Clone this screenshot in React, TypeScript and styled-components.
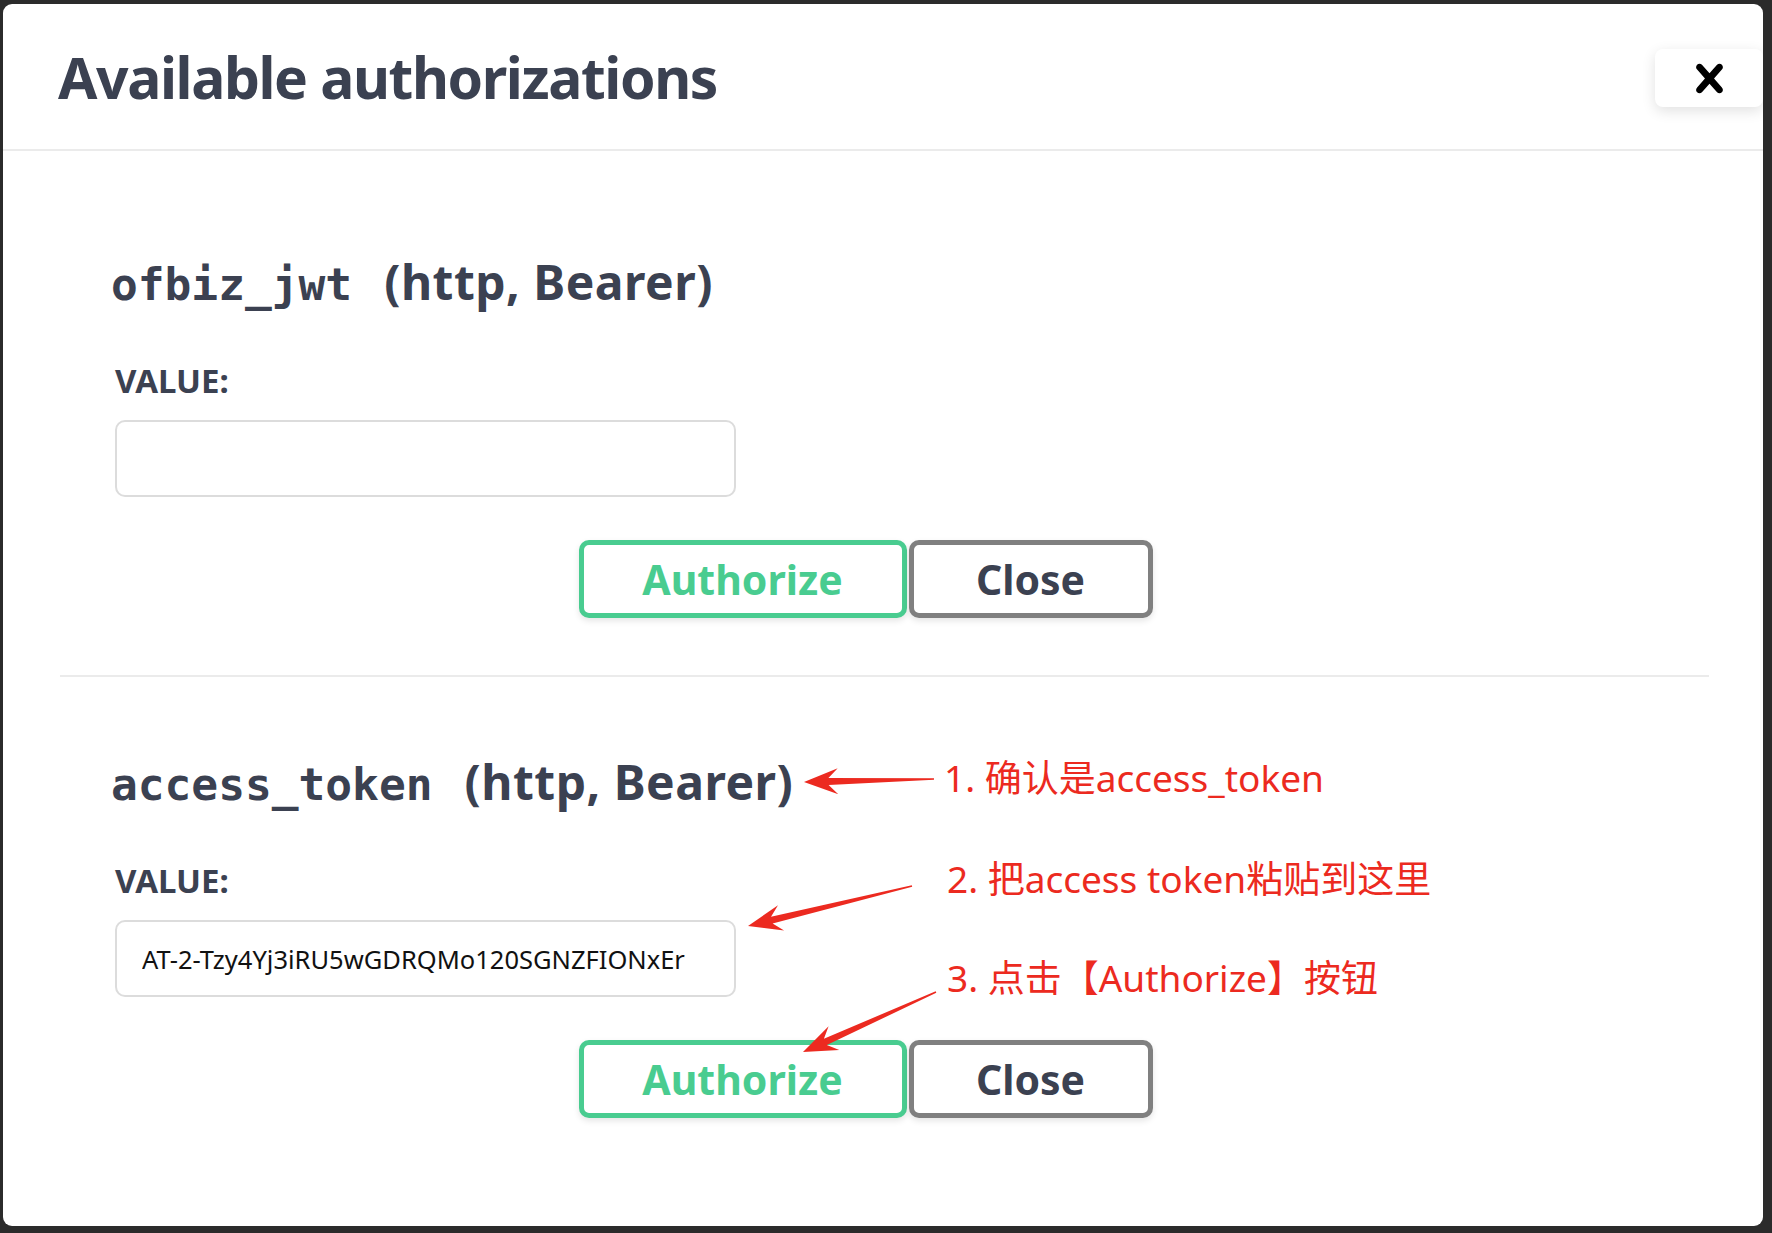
import React from "react";
import styled, { createGlobalStyle } from "styled-components";

const Global = createGlobalStyle`
  html, body { margin: 0; padding: 0; background: #2b2b2b; }
  body { font-family: "Noto Sans", "Noto Sans CJK SC", sans-serif; }
  * { box-sizing: border-box; }
`;

const Backdrop = styled.div`
  width: 1772px;
  height: 1233px;
  padding: 4px 9px 7px 3px;
  background: #2b2b2b;
`;

const Modal = styled.div`
  position: relative;
  height: 100%;
  background: #fff;
  border-radius: 9px;
  display: flex;
  flex-direction: column;
  overflow: hidden;
`;

const Header = styled.header`
  display: flex;
  align-items: flex-start;
  justify-content: space-between;
  height: 147px;
  padding: 45px 0 0 55px;
  border-bottom: 2px solid #ebebeb;
`;

const Title = styled.h3`
  margin: 0;
  font-size: 57px;
  line-height: 57px;
  font-weight: 700;
  color: #3b4151;
  letter-spacing: -1.4px;
`;

const CloseIconButton = styled.button`
  width: 108px;
  height: 58px;
  border: none;
  background: #fff;
  border-radius: 8px;
  box-shadow: 0 4px 14px rgba(0, 0, 0, 0.12);
  display: flex;
  align-items: center;
  justify-content: center;
  padding: 0;
  cursor: pointer;
  svg { width: 57px; height: 57px; }
`;

const Content = styled.div`
  padding: 26px 54px 0 57px;
  display: flex;
  flex-direction: column;
`;

const Section = styled.section<{ $divider?: boolean }>`
  padding: 75px 0 57px;
  border-bottom: ${(p) => (p.$divider ? "2px solid #ebebeb" : "none")};
`;

const Field = styled.div`
  padding-left: 55px;
  display: flex;
  flex-direction: column;
  align-items: flex-start;
`;

const SchemeTitle = styled.h4`
  margin: 0 0 46px -4px;
  font-size: 48px;
  line-height: 60px;
  font-weight: 700;
  color: #3b4151;
  letter-spacing: 0.5px;
  white-space: nowrap;
`;

const Code = styled.code`
  font-family: "DejaVu Sans Mono", monospace;
  font-size: 44.5px;
  font-weight: 700;
  letter-spacing: 0;
  margin-right: 32px;
`;

const Label = styled.label`
  font-size: 33px;
  line-height: 40px;
  font-weight: 700;
  color: #3b4151;
  margin-bottom: 19px;
`;

const Input = styled.input`
  width: 621px;
  height: 77px;
  border: 2px solid #dcdcdc;
  border-radius: 10px;
  padding: 0 0 0 25px;
  font-family: "Noto Sans", sans-serif;
  font-size: 25.5px;
  color: #111;
  background: #fff;
  outline: none;
  margin-bottom: 43px;
`;

const ButtonRow = styled.div`
  display: flex;
  justify-content: center;
  gap: 2px;
`;

const Btn = styled.button<{ $variant: "authorize" | "close" }>`
  height: 78px;
  width: ${(p) => (p.$variant === "authorize" ? "328px" : "244px")};
  margin-right: ${(p) => (p.$variant === "close" ? "38px" : "0")};
  border: 5px solid ${(p) => (p.$variant === "authorize" ? "#49cc90" : "#808080")};
  color: ${(p) => (p.$variant === "authorize" ? "#49cc90" : "#3b4151")};
  background: #fff;
  border-radius: 10px;
  box-shadow: 0 3px 6px rgba(0, 0, 0, 0.1);
  font-family: "Noto Sans", sans-serif;
  font-size: 41px;
  font-weight: 700;
  padding: 0;
  cursor: pointer;
`;

const Note = styled.div<{ $top: number; $left: number }>`
  position: absolute;
  top: ${(p) => p.$top}px;
  left: ${(p) => p.$left}px;
  font-family: "Noto Sans", "Noto Sans CJK SC", sans-serif;
  font-size: 37px;
  line-height: 38px;
  color: #ec2a20;
  white-space: nowrap;
`;

const Overlay = styled.svg`
  position: absolute;
  left: 0;
  top: 0;
  width: 100%;
  height: 100%;
  pointer-events: none;
`;

function arrowPoints(x1: number, y1: number, x2: number, y2: number) {
  const dx = x2 - x1;
  const dy = y2 - y1;
  const len = Math.hypot(dx, dy);
  const ux = dx / len;
  const uy = dy / len;
  const nx = -uy;
  const ny = ux;
  const H = 34;
  const W = 13;
  const w = 3.5;
  const tailW = 0.8;
  const bx = x2 - ux * H * 0.72;
  const by = y2 - uy * H * 0.72;
  const hx = x2 - ux * H;
  const hy = y2 - uy * H;
  const pts = [
    [x1 + nx * tailW, y1 + ny * tailW],
    [bx + nx * w, by + ny * w],
    [hx + nx * W, hy + ny * W],
    [x2, y2],
    [hx - nx * W, hy - ny * W],
    [bx - nx * w, by - ny * w],
    [x1 - nx * tailW, y1 - ny * tailW],
  ];
  return pts.map((p) => `${p[0].toFixed(1)},${p[1].toFixed(1)}`).join(" ");
}

const CloseIcon = () => (
  <svg viewBox="0 0 20 20" aria-hidden="true">
    <path
      fill="#000"
      d="M14.348 14.849c-.469.469-1.229.469-1.697 0L10 11.819l-2.651 3.029c-.469.469-1.229.469-1.697 0-.469-.469-.469-1.229 0-1.697l2.758-3.15-2.759-3.152c-.469-.469-.469-1.228 0-1.697.469-.469 1.228-.469 1.697 0L10 8.183l2.651-3.031c.469-.469 1.228-.469 1.697 0 .469.469.469 1.229 0 1.697l-2.758 3.152 2.758 3.15c.469.469.469 1.229 0 1.698z"
    />
  </svg>
);

type Scheme = { name: string; value: string };

const schemes: Scheme[] = [
  { name: "ofbiz_jwt", value: "" },
  { name: "access_token", value: "AT-2-Tzy4Yj3iRU5wGDRQMo120SGNZFIONxEr" },
];

export default function App() {
  return (
    <>
      <Global />
      <Backdrop>
        <Modal>
          <Header>
            <Title>Available authorizations</Title>
            <CloseIconButton aria-label="Close">
              <CloseIcon />
            </CloseIconButton>
          </Header>
          <Content>
            {schemes.map((s, i) => (
              <Section key={s.name} $divider={i < schemes.length - 1}>
                <Field>
                  <SchemeTitle>
                    <Code>{s.name}</Code>(http, Bearer)
                  </SchemeTitle>
                  <Label>VALUE:</Label>
                  <Input type="text" defaultValue={s.value} />
                </Field>
                <ButtonRow>
                  <Btn $variant="authorize">Authorize</Btn>
                  <Btn $variant="close">Close</Btn>
                </ButtonRow>
              </Section>
            ))}
          </Content>
          <Overlay viewBox="0 0 1760 1222" preserveAspectRatio="none">
            <polygon fill="#ec2a20" points={arrowPoints(931, 775, 801, 778)} />
            <polygon fill="#ec2a20" points={arrowPoints(909, 882, 745, 922)} />
            <polygon fill="#ec2a20" points={arrowPoints(933, 988, 800, 1048)} />
          </Overlay>
          <Note $top={755} $left={941}>1. 确认是access_token</Note>
          <Note $top={856} $left={944}>2. 把access token粘贴到这里</Note>
          <Note $top={955} $left={944}>3. 点击【Authorize】按钮</Note>
        </Modal>
      </Backdrop>
    </>
  );
}
